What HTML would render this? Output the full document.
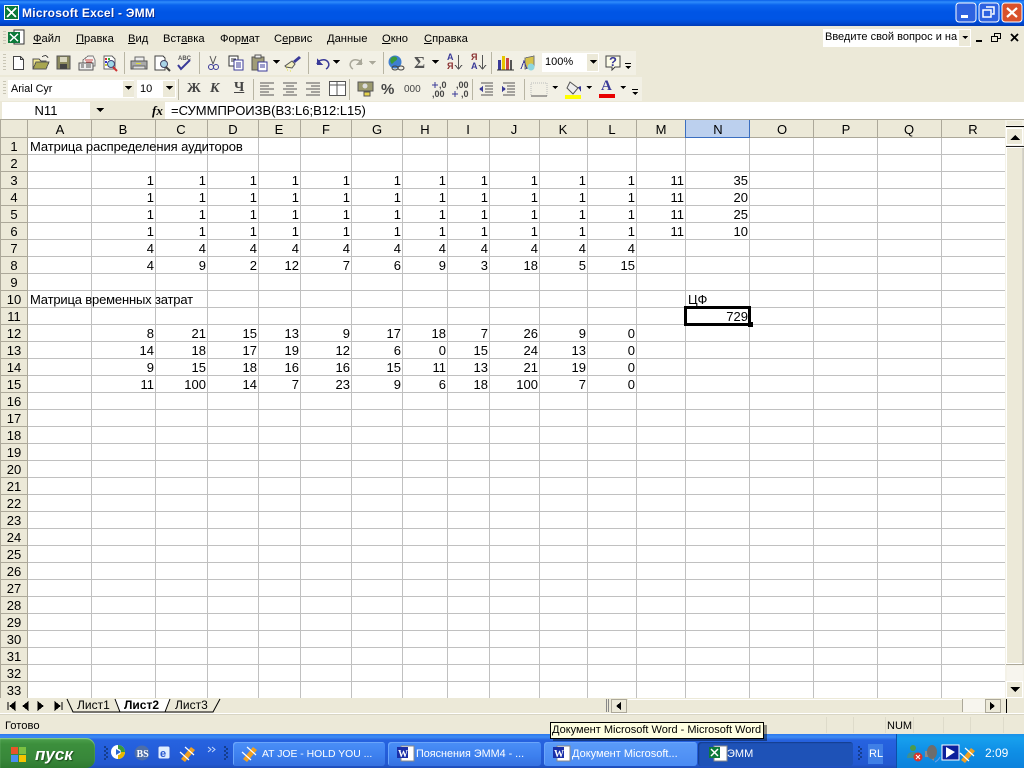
<!DOCTYPE html>
<html lang="ru"><head><meta charset="utf-8"><title>Microsoft Excel - ЭММ</title>
<style>
html,body{margin:0;padding:0;width:1024px;height:768px;overflow:hidden;background:#ece9d8}
body{position:relative;font-family:"Liberation Sans",sans-serif;font-size:13px;color:#000}
div,span{position:absolute;white-space:nowrap}
u{text-decoration:underline}
#title{left:0;top:0;width:1024px;height:26px;background:linear-gradient(#0a5fe8 0,#2f8cfb 2px,#0a63ee 5px,#0055e5 12px,#0055e5 19px,#0049d2 23px,#003bb4 26px)}
#ttext{left:22px;top:5px;color:#fff;font-weight:bold;font-size:12px;line-height:17px;text-shadow:1px 1px 0 #0a2a90;letter-spacing:.25px}
.tb{background:#f2f0e5;height:24px}
.m{top:32px;font-size:11.2px;line-height:15px;color:#000}
.wh{background:#fff}
.hd{top:120px;height:17px;line-height:20px;text-align:center;font-size:13px}
.rh{left:1px;width:26px;height:17px;line-height:20px;text-align:center;font-size:13px}
.v{height:17px;line-height:20px;text-align:right;font-size:13px}
.t{height:17px;line-height:20px;font-size:13px;letter-spacing:-.09px}
.B{left:92px;width:62px}.C{left:156px;width:50px}.D{left:208px;width:49px}.E{left:259px;width:40px}.F{left:301px;width:49px}.G{left:352px;width:49px}.H{left:403px;width:43px}.I{left:448px;width:40px}.J{left:490px;width:48px}.K{left:540px;width:46px}.L{left:588px;width:47px}.M{left:637px;width:47px}.N{left:686px;width:62px}
.task{top:742px;height:24px;border-radius:3px;background:linear-gradient(#4b8ff7,#3c7fee 60%,#3671e0);box-shadow:inset 1px 1px 0 #6aa5fb;color:#fff;font-size:11px;line-height:25px}
.task span{left:29px;top:0}
.z{z-index:3}
</style></head><body>
<div id="title"></div><div id="ttext">Microsoft Excel - ЭММ</div>

<div class="tb" style="left:0;top:51px;width:636px"></div>
<div class="tb" style="left:0;top:77px;width:642px"></div>

<div class="m" style="left:33px"><u>Ф</u>айл</div>
<div class="m" style="left:76px"><u>П</u>равка</div>
<div class="m" style="left:128px"><u>В</u>ид</div>
<div class="m" style="left:163px">Вст<u>а</u>вка</div>
<div class="m" style="left:220px">Фор<u>м</u>ат</div>
<div class="m" style="left:274px">С<u>е</u>рвис</div>
<div class="m" style="left:327px"><u>Д</u>анные</div>
<div class="m" style="left:382px"><u>О</u>кно</div>
<div class="m" style="left:424px"><u>С</u>правка</div>

<div class="wh" style="left:823px;top:29px;width:148px;height:18px"></div>
<div style="left:825px;top:30px;font-size:11px;line-height:15px">Введите свой вопрос и на</div>
<div style="left:959px;top:30px;width:11px;height:16px;background:#ece9d8"></div>

<div class="wh" style="left:542px;top:53px;width:57px;height:19px"></div>
<div style="left:545px;top:55px;font-size:11px;line-height:15px">100%</div>
<div style="left:587px;top:54px;width:11px;height:17px;background:#ece9d8"></div>

<div class="wh" style="left:8px;top:80px;width:126px;height:18px"></div>
<div style="left:11px;top:81px;font-size:10.8px;line-height:16px">Arial Cyr</div>
<div style="left:123px;top:81px;width:11px;height:16px;background:#ece9d8"></div>
<div class="wh" style="left:137px;top:80px;width:39px;height:18px"></div>
<div style="left:140px;top:81px;font-size:11px;line-height:16px">10</div>
<div style="left:163px;top:81px;width:12px;height:16px;background:#ece9d8"></div>
<div style="left:187px;top:80px;font:bold 14px/17px 'Liberation Serif',serif;color:#444">Ж</div>
<div style="left:210px;top:80px;font:italic bold 14px/17px 'Liberation Serif',serif;color:#444">К</div>
<div style="left:234px;top:79px;font:bold 14px/17px 'Liberation Serif',serif;color:#444;text-decoration:underline">Ч</div>
<div style="left:381px;top:81px;font-size:15px;font-weight:bold;line-height:17px;color:#444">%</div>
<div style="left:404px;top:83px;font-size:10px;line-height:14px;color:#444">000</div>
<div style="left:439px;top:80px;font-size:9px;line-height:10px;font-weight:bold;color:#444">,0</div>
<div style="left:432px;top:89px;font-size:9px;line-height:10px;font-weight:bold;color:#444">,00</div>
<div style="left:456px;top:80px;font-size:9px;line-height:10px;font-weight:bold;color:#444">,00</div>
<div style="left:461px;top:89px;font-size:9px;line-height:10px;font-weight:bold;color:#444">,0</div>
<div style="left:601px;top:78px;font:bold 15px/17px 'Liberation Serif',serif;color:#3a3a98">A</div>
<div style="left:414px;top:54px;font:bold 17px/18px 'Liberation Serif',serif;color:#555">Σ</div>
<div style="left:447px;top:53px;font-size:9px;font-weight:bold;line-height:9px;color:#3a3a98">A</div>
<div style="left:447px;top:62px;font-size:9px;font-weight:bold;line-height:9px;color:#8a3030">Я</div>
<div style="left:471px;top:53px;font-size:9px;font-weight:bold;line-height:9px;color:#8a3030">Я</div>
<div style="left:471px;top:62px;font-size:9px;font-weight:bold;line-height:9px;color:#3a3a98">A</div>
<div class="z" style="left:609px;top:54px;font-size:13px;font-weight:bold;line-height:15px;color:#3a3a98">?</div>

<div class="wh" style="left:2px;top:102px;width:88px;height:17px"></div>
<div style="left:2px;top:102px;width:88px;text-align:center;line-height:17px;font-size:13px">N11</div>
<div style="left:152px;top:102px;font:italic bold 13px/17px 'Liberation Serif',serif">fx</div>
<div class="wh" style="left:165px;top:102px;width:859px;height:17px"></div>
<div style="left:171px;top:102px;line-height:17px;font-size:13px">=СУММПРОИЗВ(B3:L6;B12:L15)</div>

<div style="left:0;top:119px;width:1024px;height:1px;background:#aca899"></div>
<div style="left:0;top:120px;width:1005px;height:578px;background:#fff"></div>
<div style="left:0;top:120px;width:1005px;height:17px;background:#ece9d8"></div>
<div style="left:0;top:120px;width:27px;height:578px;background:#ece9d8"></div>
<div style="left:686px;top:120px;width:63px;height:17px;background:#bcd0ee"></div>

<svg style="position:absolute;left:0;top:0" width="1024" height="768" viewBox="0 0 1024 768" shape-rendering="crispEdges">
<path fill="none" stroke="#c0c0c0" d="M27.5 137V698M91.5 137V698M155.500 137V698M207.500 137V698M258.500 137V698M300.500 137V698M351.500 137V698M402.500 137V698M447.500 137V698M489.500 137V698M539.500 137V698M587.500 137V698M636.500 137V698M685.500 137V698M749.500 137V698M813.500 137V698M877.500 137V698M941.500 137V698"/>
<path fill="none" stroke="#c0c0c0" transform="translate(0,1)" d="M27 153.500H1005M27 170.500H1005M27 187.500H1005M27 204.500H1005M27 221.500H1005M27 238.500H1005M27 255.500H1005M27 272.500H1005M27 289.500H1005M27 306.500H1005M27 323.500H1005M27 340.500H1005M27 357.500H1005M27 374.500H1005M27 391.500H1005M27 408.500H1005M27 425.500H1005M27 442.500H1005M27 459.500H1005M27 476.500H1005M27 493.500H1005M27 510.500H1005M27 527.500H1005M27 544.500H1005M27 561.500H1005M27 578.500H1005M27 595.500H1005M27 612.500H1005M27 629.500H1005M27 646.500H1005M27 663.500H1005M27 680.500H1005"/>
<path fill="none" stroke="#aca899" d="M0.500 120V698M27.500 120V698M91.500 120V137M155.500 120V137M207.500 120V137M258.500 120V137M300.500 120V137M351.500 120V137M402.500 120V137M447.500 120V137M489.500 120V137M539.500 120V137M587.500 120V137M636.500 120V137M813.500 120V137M877.500 120V137M941.500 120V137M1005.500 120V137"/>
<path fill="none" stroke="#aca899" transform="translate(0,1)" d="M0 136.500H1005M0 153.500H27M0 170.500H27M0 187.500H27M0 204.500H27M0 221.500H27M0 238.500H27M0 255.500H27M0 272.500H27M0 289.500H27M0 306.500H27M0 323.500H27M0 340.500H27M0 357.500H27M0 374.500H27M0 391.500H27M0 408.500H27M0 425.500H27M0 442.500H27M0 459.500H27M0 476.500H27M0 493.500H27M0 510.500H27M0 527.500H27M0 544.500H27M0 561.500H27M0 578.500H27M0 595.500H27M0 612.500H27M0 629.500H27M0 646.500H27M0 663.500H27M0 680.500H27"/>
<path fill="none" stroke="#3a6ec0" d="M685.500 120V137M749.500 120V137M685 137.500H750"/>
<rect x="685.500" y="307.500" width="64" height="17" fill="none" stroke="#000" stroke-width="3"/>
<rect x="748" y="322" width="5" height="5" fill="#000"/>

<g id="titleicon"><rect x="4" y="5" width="15" height="15" fill="#fff"/><rect x="5" y="6" width="13" height="13" fill="#0d7a3a"/><path d="M7 8l9 9M16 8l-9 9" stroke="#fff" stroke-width="2" fill="none"/></g>
<g shape-rendering="auto">
<rect x="956" y="3" width="20" height="19" rx="3" fill="#2e62e0" stroke="#fff"/><rect x="961" y="15" width="7" height="3" fill="#fff"/>
<rect x="979" y="3" width="20" height="19" rx="3" fill="#2e62e0" stroke="#fff"/><path d="M986 7h8v7h-2M983 10h8v7h-8z" fill="none" stroke="#fff" stroke-width="1.500"/>
<rect x="1002" y="3" width="20" height="19" rx="3" fill="#d9512c" stroke="#fff"/><path d="M1007 8l10 9M1017 8l-10 9" stroke="#fff" stroke-width="2.200"/>
</g>
<path d="M976 41h6" stroke="#000" stroke-width="2" fill="none"/>
<path d="M991.500 36.500h6v5h-6zM994.500 36v-2.500h6v5h-3" fill="none" stroke="#000" stroke-width="1"/>
<path d="M1011 34l7 7M1018 34l-7 7" stroke="#000" stroke-width="1.800" fill="none" shape-rendering="auto"/>

<g fill="#c9c6b5"><path d="M3 31h3v1H3zM3 34h3v1H3zM3 37h3v1H3zM3 40h3v1H3zM3 43h3v1H3zM3 54h3v1H3zM3 57h3v1H3zM3 60h3v1H3zM3 63h3v1H3zM3 66h3v1H3zM3 69h3v1H3zM3 81h3v1H3zM3 84h3v1H3zM3 87h3v1H3zM3 90h3v1H3zM3 93h3v1H3z"/></g>
<rect x="14" y="30" width="10" height="14" fill="#fff" stroke="#333"/><rect x="8" y="32" width="12" height="11" fill="#0d7a3a"/><path d="M10 34l8 7M18 34l-8 7" stroke="#fff" stroke-width="1.500"/>

<g fill="none" stroke="#b8b5a3"><path d="M124.500 52v22M199.500 52v22M308.500 52v22M383.500 52v22M491.500 52v22M178.500 79v21M253.500 79v21M349.500 79v21M472.500 79v21M524.500 79v21"/></g>

<path d="M13.500 56.500h7l3 3v10h-10z" fill="#fff" stroke="#444"/><path d="M20.500 56.500v3h3" fill="none" stroke="#444"/>
<path d="M33 59h6l2 2h5v8H33z" fill="#f0e68c" stroke="#555"/><path d="M33 69l3-7h13l-3 7z" fill="#a8a650" stroke="#555"/><path d="M42 57c2-2 5-2 6 1" fill="none" stroke="#444"/>
<rect x="57" y="56" width="13" height="13" fill="#8c8a5e" stroke="#555"/><rect x="60" y="57" width="7" height="5" fill="#d9d7c0"/><rect x="60" y="64" width="7" height="5" fill="#444"/>
<path d="M83 60l5-4h5l2 4v6H83z" fill="#f4f2f0" stroke="#777"/><path d="M85 60h8M86 62h6" stroke="#c44"/><rect x="79" y="63" width="14" height="7" fill="#eee" stroke="#555"/><path d="M81 65h3M81 67h3M86 65h5M86 67h5" stroke="#555"/>
<path d="M104 56h8l3 3v10h-11z" fill="#fff" stroke="#666"/><rect x="105" y="58" width="2" height="2" fill="#c33"/><rect x="108" y="58" width="2" height="2" fill="#3a3"/><rect x="105" y="61" width="2" height="2" fill="#33c"/><rect x="105" y="64" width="2" height="2" fill="#cc3"/><circle cx="111" cy="64" r="3.500" fill="#9ed8e8" stroke="#447" shape-rendering="auto"/><path d="M113 67l4 4" stroke="#c33" stroke-width="2" shape-rendering="auto"/>

<path d="M135 57h9v4h-9z" fill="#eee" stroke="#666"/><path d="M131 61h16v8h-16z" fill="#aaa" stroke="#555"/><path d="M133 66h12v3h-12z" fill="#ddd" stroke="#666"/><rect x="136" y="63" width="5" height="1" fill="#dd3"/>
<path d="M155 56h8l2 2v12h-10z" fill="#fff" stroke="#444"/><circle cx="164" cy="64" r="3.500" fill="#a8d4e8" stroke="#446" shape-rendering="auto"/><path d="M166 67l4 4" stroke="#444" stroke-width="2" shape-rendering="auto"/>
<text x="178" y="60" font-family="Liberation Sans" font-size="6" font-weight="bold" fill="#555">ABC</text><path d="M178 65l3 4 9-9" fill="none" stroke="#3a3a98" stroke-width="2" shape-rendering="auto"/>

<path d="M210 56l3 8M216 56l-3 8" stroke="#555" shape-rendering="auto"/><circle cx="211" cy="67" r="2.500" fill="none" stroke="#3a3a98" shape-rendering="auto"/><circle cx="216" cy="67" r="2.500" fill="none" stroke="#3a3a98" shape-rendering="auto"/>
<rect x="229" y="56" width="9" height="10" fill="#fff" stroke="#333"/><path d="M231 59h5M231 61h5" stroke="#333"/><rect x="234" y="60" width="9" height="10" fill="#fff" stroke="#3a3a98"/><path d="M236 63h5M236 65h5M236 67h5" stroke="#3a3a98"/>
<rect x="252" y="57" width="12" height="13" fill="#a09c78" stroke="#555"/><rect x="255" y="55" width="6" height="3" fill="#eee" stroke="#555"/><rect x="258" y="62" width="9" height="9" fill="#fff" stroke="#3a3a98"/><path d="M260 65h5M260 67h5" stroke="#3a3a98"/>
<path d="M299 56l2 2-6 5-2-2z" fill="#3a3a98" shape-rendering="auto"/><path d="M292 61l3 3-3 4-6-1-1-1z" fill="#f2efc0" stroke="#555" shape-rendering="auto"/><path d="M287 70h1M290 71h1M286 68h1" stroke="#dd3"/>
<path d="M317 64c1-4 8-6 11-2 2 3 0 6-2 7" fill="none" stroke="#3a3a98" stroke-width="1.500" shape-rendering="auto"/><path d="M317 58v7h6z" fill="#3a3a98"/>
<path d="M362 64c-1-4-8-6-11-2-2 3 0 6 2 7" fill="none" stroke="#aaa89a" stroke-width="1.500" shape-rendering="auto"/><path d="M362 58v7h-6z" fill="#aaa89a"/>
<g shape-rendering="auto"><circle cx="395" cy="62" r="6.500" fill="#3f7fd0"/><path d="M391 58c2-2 5-2 6 0s-2 3-3 4-2 3-3 1-1-3 0-5z" fill="#3a9a3a"/><path d="M398 68a3 2 0 1 1 6 0a3 2 0 1 1-6 0M392 68a3 2 0 1 1 6 0a3 2 0 1 1-6 0" fill="none" stroke="#444"/></g>
<path d="M458.500 55v13M455 65l3.500 4 3.500-4M482.500 55v13M479 65l3.500 4 3.500-4" fill="none" stroke="#555"/>
<rect x="498" y="60" width="3" height="10" fill="#3a3a98"/><rect x="502" y="56" width="3" height="14" fill="#e6c400"/><rect x="506" y="58" width="3" height="12" fill="#c44"/><rect x="510" y="60" width="2" height="10" fill="#555"/><path d="M497 70h17" stroke="#333"/>
<path d="M525 58l9-2v10l-9 3z" fill="#d6c24a" stroke="#777"/><circle cx="531" cy="67" r="3.500" fill="#8ed6e0" shape-rendering="auto"/><path d="M521 69l3-8 3 8" fill="none" stroke="#3a3a98"/>
<path d="M606 56h14v11h-5l-3 3v-3h-6z" fill="#fdfde8" stroke="#444"/>

<g fill="#000"><path d="M273 60h7l-3.500 4zM333 60h7l-3.500 4zM432 60h7l-3.500 4zM590 60h7l-3.500 4zM625 66h6l-3 3zM625 63h6v1h-6z"/>
<path d="M125 86h7l-3.500 4zM166 86h7l-3.500 4zM552 86h6l-3 3zM586 86h6l-3 3zM620 86h6l-3 3zM632 92h6l-3 3zM632 89h6v1h-6zM96 108h8l-4 4zM962 36h6l-3 3z"/></g>
<path d="M369 61h7l-3.500 4z" fill="#aaa89a"/>

<path d="M260 83h14M260 86h9M260 89h14M260 92h9M260 95h14M283 83h14M286 86h8M283 89h14M286 92h8M283 95h14M306 83h14M311 86h9M306 89h14M311 92h9M306 95h14" stroke="#555" fill="none"/>
<rect x="329.500" y="81.500" width="16" height="14" fill="#fff" stroke="#555"/><path d="M337 81v14M329 85h16" stroke="#555"/>
<rect x="358" y="82" width="15" height="9" fill="#9c9a6e" stroke="#555"/><circle cx="365" cy="86" r="2.500" fill="#ddd" shape-rendering="auto"/><rect x="364" y="92" width="6" height="4" fill="#e6d24a" stroke="#555"/>
<path d="M481 83h12M485 86h8M485 89h8M485 92h8M481 95h12M503 83h12M507 86h8M507 89h8M507 92h8M503 95h12" stroke="#555" fill="none"/><path d="M479 89l4-3v6zM506 89l-4-3v6z" fill="#3a3a98"/>
<path d="M531 83h16v13h-16z" fill="none" stroke="#bbb" stroke-dasharray="1 1"/><path d="M531 96h16" stroke="#555"/>
<path d="M570 82l8 6-5 6-6-6z" fill="#eee" stroke="#555" shape-rendering="auto"/><path d="M578 87l3 5v-6z" fill="#3a3a98"/><rect x="565" y="95" width="16" height="4" fill="#ffff00"/>
<rect x="599" y="94" width="16" height="4" fill="#e80000"/>
<path d="M435 82v6M432 85h6M455 91v6M452 94h6" stroke="#3a3a98"/>

<rect x="1005" y="120" width="19" height="578" fill="#f4f2e8"/>
<path d="M1006 126.500h18" stroke="#000"/><rect x="1007" y="121" width="15" height="4" fill="#ece9d8"/>
<rect x="1006.500" y="128.500" width="16" height="16" fill="#ece9d8" stroke="#fff"/><path d="M1010 140h10l-5-5z" fill="#000"/>
<path d="M1006 146.500h18" stroke="#222"/>
<rect x="1006.500" y="147.500" width="16" height="516" fill="#ece9d8" stroke="#fff"/><path d="M1023 148v516M1006 664.500h18" stroke="#aca899"/>
<rect x="1007" y="666" width="16" height="15" fill="#f7f5ee"/>
<rect x="1006.500" y="681.500" width="16" height="16" fill="#ece9d8" stroke="#fff"/><path d="M1010 687h10l-5 5z" fill="#000"/>

<path d="M0 713.500H1024" stroke="#fff"/><path d="M0 714.500H1024" stroke="#d8d5c4"/>
<path d="M826.500 717v16M853.500 717v16M885.500 717v16M913.500 717v16M943.500 717v16M970.500 717v16M1003.500 717v16" stroke="#dedbca"/>
<path d="M8 702v8M15 702l-5 4 5 4zM28 702l-5 4 5 4zM38 702l5 4-5 4zM55 702l5 4-5 4zM62 702v8" fill="#000" stroke="#000"/>
<path d="M67 699l6 13h47" fill="none" stroke="#000" shape-rendering="auto"/>
<path d="M165 712h48l7-13" fill="none" stroke="#000" shape-rendering="auto"/>
<path d="M115 699h55l-5 13h-45z" fill="#fff"/>
<path d="M115 699l5 13h45l5-13" fill="none" stroke="#000" shape-rendering="auto"/>
<path d="M606.500 699v13M608.500 699v13" stroke="#888"/>
<rect x="611.500" y="699.500" width="15" height="13" fill="#ece9d8" stroke="#aca899"/><path d="M621 702v8l-5-4z" fill="#000"/>
<rect x="628" y="699" width="334" height="13" fill="#ece9d8"/><path d="M628 699.500h334" stroke="#fff"/><path d="M962.500 699v13" stroke="#aca899"/>
<rect x="963" y="699" width="22" height="13" fill="#f7f5ee"/>
<rect x="985.500" y="699.500" width="15" height="13" fill="#ece9d8" stroke="#aca899"/><path d="M990 702v8l5-4z" fill="#000"/>
<path d="M1006.500 699v14" stroke="#000"/>
</svg>

<div class="hd" style="left:50px;width:20px">A</div><div class="hd" style="left:113px;width:20px">B</div><div class="hd" style="left:171px;width:20px">C</div><div class="hd" style="left:223px;width:20px">D</div><div class="hd" style="left:269px;width:20px">E</div><div class="hd" style="left:316px;width:20px">F</div><div class="hd" style="left:367px;width:20px">G</div><div class="hd" style="left:415px;width:20px">H</div><div class="hd" style="left:458px;width:20px">I</div><div class="hd" style="left:504px;width:20px">J</div><div class="hd" style="left:553px;width:20px">K</div><div class="hd" style="left:602px;width:20px">L</div><div class="hd" style="left:651px;width:20px">M</div><div class="hd" style="left:708px;width:20px">N</div><div class="hd" style="left:772px;width:20px">O</div><div class="hd" style="left:836px;width:20px">P</div><div class="hd" style="left:899px;width:20px">Q</div><div class="hd" style="left:963px;width:20px">R</div>

<div class="rh" style="top:137px">1</div><div class="rh" style="top:154px">2</div><div class="rh" style="top:171px">3</div><div class="rh" style="top:188px">4</div><div class="rh" style="top:205px">5</div><div class="rh" style="top:222px">6</div><div class="rh" style="top:239px">7</div><div class="rh" style="top:256px">8</div><div class="rh" style="top:273px">9</div><div class="rh" style="top:290px">10</div><div class="rh" style="top:307px">11</div><div class="rh" style="top:324px">12</div><div class="rh" style="top:341px">13</div><div class="rh" style="top:358px">14</div><div class="rh" style="top:375px">15</div><div class="rh" style="top:392px">16</div><div class="rh" style="top:409px">17</div><div class="rh" style="top:426px">18</div><div class="rh" style="top:443px">19</div><div class="rh" style="top:460px">20</div><div class="rh" style="top:477px">21</div><div class="rh" style="top:494px">22</div><div class="rh" style="top:511px">23</div><div class="rh" style="top:528px">24</div><div class="rh" style="top:545px">25</div><div class="rh" style="top:562px">26</div><div class="rh" style="top:579px">27</div><div class="rh" style="top:596px">28</div><div class="rh" style="top:613px">29</div><div class="rh" style="top:630px">30</div><div class="rh" style="top:647px">31</div><div class="rh" style="top:664px">32</div><div class="rh" style="top:681px">33</div>

<div class="t" style="left:30px;top:137px">Матрица распределения аудиторов</div>
<div class="t" style="left:30px;top:290px;letter-spacing:-.17px">Матрица временных затрат</div>
<div class="t" style="left:688px;top:290px">ЦФ</div>
<div class="v N" style="top:307px">729</div>

<div style="left:0;top:171px;width:0;height:17px"><span class="v B">1</span><span class="v C">1</span><span class="v D">1</span><span class="v E">1</span><span class="v F">1</span><span class="v G">1</span><span class="v H">1</span><span class="v I">1</span><span class="v J">1</span><span class="v K">1</span><span class="v L">1</span><span class="v M">11</span><span class="v N">35</span></div>
<div style="left:0;top:188px;width:0;height:17px"><span class="v B">1</span><span class="v C">1</span><span class="v D">1</span><span class="v E">1</span><span class="v F">1</span><span class="v G">1</span><span class="v H">1</span><span class="v I">1</span><span class="v J">1</span><span class="v K">1</span><span class="v L">1</span><span class="v M">11</span><span class="v N">20</span></div>
<div style="left:0;top:205px;width:0;height:17px"><span class="v B">1</span><span class="v C">1</span><span class="v D">1</span><span class="v E">1</span><span class="v F">1</span><span class="v G">1</span><span class="v H">1</span><span class="v I">1</span><span class="v J">1</span><span class="v K">1</span><span class="v L">1</span><span class="v M">11</span><span class="v N">25</span></div>
<div style="left:0;top:222px;width:0;height:17px"><span class="v B">1</span><span class="v C">1</span><span class="v D">1</span><span class="v E">1</span><span class="v F">1</span><span class="v G">1</span><span class="v H">1</span><span class="v I">1</span><span class="v J">1</span><span class="v K">1</span><span class="v L">1</span><span class="v M">11</span><span class="v N">10</span></div>
<div style="left:0;top:239px;width:0;height:17px"><span class="v B">4</span><span class="v C">4</span><span class="v D">4</span><span class="v E">4</span><span class="v F">4</span><span class="v G">4</span><span class="v H">4</span><span class="v I">4</span><span class="v J">4</span><span class="v K">4</span><span class="v L">4</span></div>
<div style="left:0;top:256px;width:0;height:17px"><span class="v B">4</span><span class="v C">9</span><span class="v D">2</span><span class="v E">12</span><span class="v F">7</span><span class="v G">6</span><span class="v H">9</span><span class="v I">3</span><span class="v J">18</span><span class="v K">5</span><span class="v L">15</span></div>
<div style="left:0;top:324px;width:0;height:17px"><span class="v B">8</span><span class="v C">21</span><span class="v D">15</span><span class="v E">13</span><span class="v F">9</span><span class="v G">17</span><span class="v H">18</span><span class="v I">7</span><span class="v J">26</span><span class="v K">9</span><span class="v L">0</span></div>
<div style="left:0;top:341px;width:0;height:17px"><span class="v B">14</span><span class="v C">18</span><span class="v D">17</span><span class="v E">19</span><span class="v F">12</span><span class="v G">6</span><span class="v H">0</span><span class="v I">15</span><span class="v J">24</span><span class="v K">13</span><span class="v L">0</span></div>
<div style="left:0;top:358px;width:0;height:17px"><span class="v B">9</span><span class="v C">15</span><span class="v D">18</span><span class="v E">16</span><span class="v F">16</span><span class="v G">15</span><span class="v H">11</span><span class="v I">13</span><span class="v J">21</span><span class="v K">19</span><span class="v L">0</span></div>
<div style="left:0;top:375px;width:0;height:17px"><span class="v B">11</span><span class="v C">100</span><span class="v D">14</span><span class="v E">7</span><span class="v F">23</span><span class="v G">9</span><span class="v H">6</span><span class="v I">18</span><span class="v J">100</span><span class="v K">7</span><span class="v L">0</span></div>

<div style="left:77px;top:698px;font-size:12px;line-height:15px">Лист1</div>
<div style="left:124px;top:698px;font-size:12px;line-height:15px;font-weight:bold">Лист2</div>
<div style="left:175px;top:698px;font-size:12px;line-height:15px">Лист3</div>

<div style="left:5px;top:719px;font-size:11.2px;line-height:15px">Готово</div>
<div style="left:887px;top:719px;font-size:11px;line-height:15px">NUM</div>

<div style="left:0;top:734px;width:1024px;height:34px;background:linear-gradient(#2a78ee 0,#3f8cf3 3px,#2663e0 6px,#245edb 50%,#2257cf 90%,#1d4cb8 100%)"></div>
<div style="left:0;top:738px;width:95px;height:30px;border-radius:0 9px 9px 0;background:linear-gradient(#4ea24e,#3c8f3c 20%,#38873a 70%,#2e7a30);box-shadow:inset 0 1px 1px #8fcf8f"></div>
<div style="left:35px;top:744px;color:#fff;font:italic bold 17px/21px 'Liberation Sans',sans-serif;text-shadow:1px 1px 1px #1d4d1d">пуск</div>
<div class="task" style="left:233px;width:152px"><span style="font-size:10.4px">AT JOE - HOLD YOU ...</span></div>
<div class="task" style="left:388px;width:153px"><span style="left:28px;font-size:10.8px">Пояснения ЭММ4 - ...</span></div>
<div class="task" style="left:544px;width:153px;background:linear-gradient(#5a9bf8,#4a8bf3)"><span style="left:28px">Документ Microsoft...</span></div>
<div class="task" style="left:698px;width:155px;background:#1e52b7;box-shadow:inset 1px 1px 1px #153d8e"><span>ЭММ</span></div>
<div style="left:868px;top:744px;width:15px;height:20px;background:#3f7fe6"></div>
<div style="left:869px;top:746px;color:#fff;font-size:11px;line-height:17px">RL</div>
<div style="left:896px;top:734px;width:128px;height:34px;background:linear-gradient(#1a90e8 0,#17a0ee 4px,#0f8fe6 50%,#0c82dc);border-left:1px solid #0c50a8"></div>
<div style="left:985px;top:745px;color:#fff;font-size:12px;line-height:16px">2:09</div>

<svg style="position:absolute;left:0;top:0" width="1024" height="768" viewBox="0 0 1024 768">
<g><rect x="11" y="747" width="7" height="7" fill="#e8552a"/><rect x="19" y="747" width="7" height="7" fill="#7bc142"/><rect x="11" y="755" width="7" height="7" fill="#4a8ef0"/><rect x="19" y="755" width="7" height="7" fill="#f5c400"/></g>
<path d="M105 746v2M105 750v2M105 754v2M105 758v2M107 748v2M107 752v2M107 756v2M225 746v2M225 750v2M225 754v2M225 758v2M227 748v2M227 752v2M227 756v2M859 746v2M859 750v2M859 754v2M859 758v2M861 748v2M861 752v2M861 756v2" stroke="#153d8e" stroke-width="2" fill="none"/>
<circle cx="118" cy="752" r="7" fill="#fff"/><path d="M118 745a7 7 0 0 1 7 7h-4a3 3 0 0 0-3-3z" fill="#3a9a3a"/><path d="M125 752a7 7 0 0 1-7 7v-4a3 3 0 0 0 3-3z" fill="#e6b800"/><path d="M116 749l5 3-5 3z" fill="#2a66d0"/>
<circle cx="142" cy="753" r="7.500" fill="#4d6ea8"/><text x="136.500" y="757" font-family="Liberation Serif" font-size="10" font-weight="bold" fill="#fff">BS</text>
<rect x="158" y="746" width="12" height="13" rx="2" fill="#dfeeff" stroke="#2a5ad0"/><text x="160" y="757" font-family="Liberation Sans" font-size="11" font-weight="bold" fill="#2a5ad0">e</text>
<path d="M181 759l10-12 4 3-10 12z" fill="#f0a020"/><path d="M185 747l9 8M180 752l9 8" stroke="#fff" stroke-width="1.200" fill="none"/>
<path d="M208 747l3 2.500-3 2.500M212 747l3 2.500-3 2.500" fill="none" stroke="#c6d8f8"/>
<path d="M243 759l10-12 4 3-10 12z" fill="#f0a020"/><path d="M247 747l9 8M242 752l9 8" stroke="#fff" stroke-width="1.200" fill="none"/>
<g><rect x="401" y="746" width="13" height="15" fill="#fff" stroke="#888"/><rect x="397" y="747" width="11" height="11" fill="#1a2fa8"/><text x="398" y="757" font-family="Liberation Serif" font-size="10" font-weight="bold" fill="#fff">W</text></g>
<g><rect x="557" y="746" width="13" height="15" fill="#fff" stroke="#888"/><rect x="553" y="747" width="11" height="11" fill="#1a2fa8"/><text x="554" y="757" font-family="Liberation Serif" font-size="10" font-weight="bold" fill="#fff">W</text></g>
<g><rect x="714" y="746" width="13" height="15" fill="#fff" stroke="#888"/><rect x="709" y="747" width="11" height="11" fill="#0d7a3a"/><path d="M711 749l7 7M718 749l-7 7" stroke="#fff" stroke-width="1.500"/></g>
<circle cx="913" cy="748" r="3" fill="#4c9a4c"/><path d="M907 758c0-5 3-6 6-6s6 1 6 6z" fill="#3f8f8f"/><circle cx="918" cy="757" r="4.500" fill="#d8342a"/><path d="M916 755l4 4M920 755l-4 4" stroke="#fff"/>
<path d="M925 751h4l5-5v15l-5-4h-4z" fill="#8c8c8c"/><ellipse cx="932" cy="752" rx="5" ry="7" fill="#6d6d6d"/><path d="M935 762c2-1 4-3 5-5" stroke="#6aa0e8" fill="none"/>
<rect x="942" y="745" width="17" height="15" fill="#0c1f9c" stroke="#fff"/><path d="M946 747l9 5-9 6z" fill="#fff"/>
<path d="M961 760l10-12 4 3-10 12z" fill="#f0a020"/><path d="M965 748l9 8M960 753l9 8" stroke="#fff" stroke-width="1.200" fill="none"/>
</svg>

<div style="left:553px;top:725px;width:214px;height:16px;background:rgba(0,0,0,.4)"></div>
<div style="left:550px;top:722px;width:212px;height:15px;background:#ffffe1;border:1px solid #000;font-size:11px;line-height:15px;text-indent:1px">Документ Microsoft Word - Microsoft Word</div>
</body></html>
